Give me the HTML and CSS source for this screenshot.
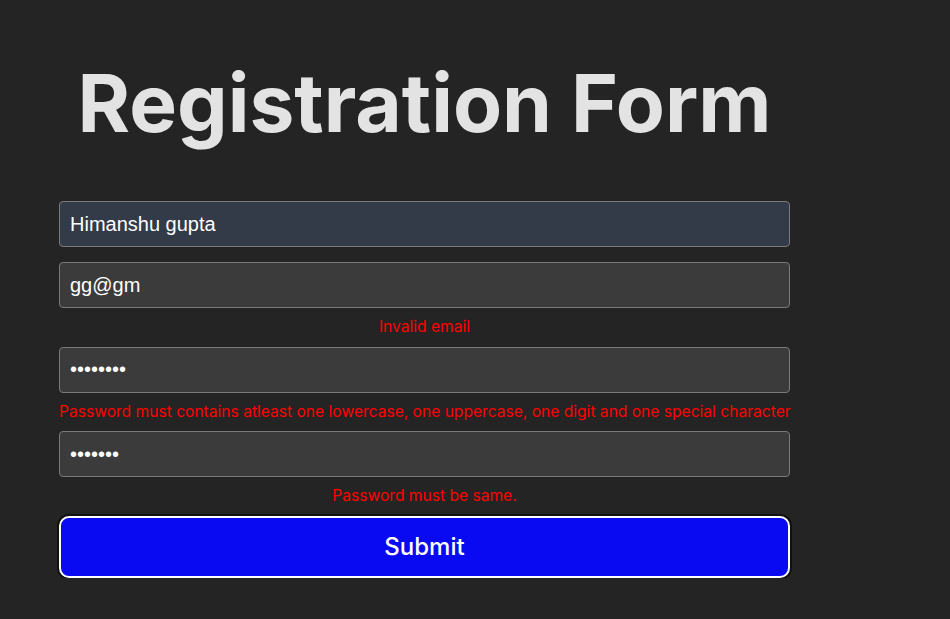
FILE: index.html
```html
<!DOCTYPE html>
<html lang="en">
<head>
<meta charset="UTF-8">
<title>Registration Form</title>
<link rel="stylesheet" href="styles.css">
</head>
<body>
<div class="wrap">
  <h1 class="title">Registration Form</h1>
  <form class="form">
    <input class="field autofill" type="text" value="Himanshu gupta">
    <input class="field" type="text" value="gg@gm">
    <p class="error">Invalid email</p>
    <input class="field" type="password" value="abcdefgh">
    <p class="error">Password must contains atleast one lowercase, one uppercase, one digit and one special character</p>
    <input class="field" type="password" value="abcdefg">
    <p class="error">Password must be same.</p>
    <button class="submit" type="button">Submit</button>
  </form>
</div>
</body>
</html>
```

FILE: styles.css
```css
html, body {
  margin: 0;
  padding: 0;
}
body {
  background: #242424;
  color: rgba(255, 255, 255, 0.87);
  font-family: Inter, "Noto Sans", sans-serif;
}
.wrap {
  width: 731px;
  margin-left: 59px;
  padding-top: 59px;
}
.title {
  margin: 0 0 54px;
  font-size: 80.2px;
  line-height: 88px;
  font-weight: 700;
  text-align: center;
  white-space: nowrap;
  color: #e3e3e3;
}
.form {
  display: flex;
  flex-direction: column;
  gap: 15px;
}
.field {
  box-sizing: border-box;
  height: 46px;
  width: 100%;
  margin: 0;
  padding: 0 10px;
  background: #3b3b3b;
  border: 1px solid #7a7a7a;
  border-radius: 4px;
  color: #ffffff;
  font-family: "Liberation Sans", Arial, sans-serif;
  font-size: 20px;
  outline: none;
}
.field.autofill {
  background: #333a48;
}
.error {
  margin: -5px 0;
  color: #ff0000;
  font-size: 15.6px;
  line-height: 18.6px;
  text-align: center;
  white-space: nowrap;
}
.submit {
  box-sizing: border-box;
  height: 62px;
  width: 100%;
  margin: 0;
  background: #0a0af2;
  border: 2px solid #ffffff;
  border-radius: 10px;
  box-shadow: 0 0 0 2px #111111;
  color: #ffffff;
  font-family: Inter, "Noto Sans", sans-serif;
  font-size: 24px;
  font-weight: 500;
  cursor: pointer;
}
```
